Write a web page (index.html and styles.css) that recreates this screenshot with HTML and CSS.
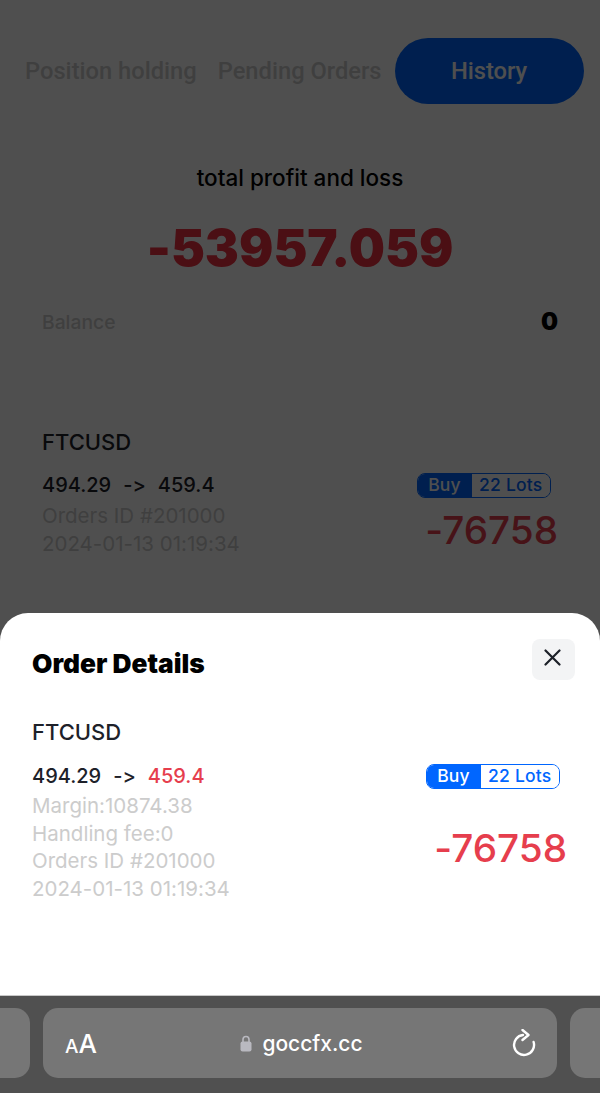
FILE: index.html
```html
<!DOCTYPE html>
<html lang="en">
<head>
<meta charset="utf-8">
<title>Order Details</title>
<link rel="stylesheet" href="styles.css">
</head>
<body>
<main class="page">
  <nav class="tabs">
    <span class="tab tab-first">Position holding</span>
    <span class="tab">Pending Orders</span>
    <span class="tab tab-active">History</span>
  </nav>
  <section class="summary">
    <div class="summary-label">total profit and loss</div>
    <div class="summary-value">-53957.059</div>
    <div class="balance"><span class="balance-label">Balance</span><span class="balance-value">0</span></div>
  </section>
  <section class="order order-list">
    <div class="symbol">FTCUSD</div>
    <div class="order-body">
      <div class="order-info">
        <div class="prices"><span>494.29</span><span>-&gt;</span><span>459.4</span></div>
        <div class="meta">Orders ID #201000</div>
        <div class="meta">2024-01-13 01:19:34</div>
      </div>
      <div class="order-side">
        <div class="badge"><span class="badge-buy">Buy</span><span class="badge-lots">22 Lots</span></div>
        <div class="pnl">-76758</div>
      </div>
    </div>
  </section>
</main>
<div class="scrim"></div>
<div class="bottom">
  <section class="sheet">
    <header class="sheet-head">
      <h2 class="sheet-title">Order Details</h2>
      <button class="close" aria-label="Close">
        <svg width="17" height="17" viewBox="0 0 17 17"><path d="M1.5 1.5l14 14M15.5 1.5l-14 14" fill="none" stroke="#1d2129" stroke-width="2.2" stroke-linecap="round"/></svg>
      </button>
    </header>
    <div class="order">
      <div class="symbol">FTCUSD</div>
      <div class="order-body">
        <div class="order-info">
          <div class="prices"><span>494.29</span><span>-&gt;</span><span class="down">459.4</span></div>
          <div class="meta">Margin:10874.38</div>
          <div class="meta">Handling fee:0</div>
          <div class="meta">Orders ID #201000</div>
          <div class="meta">2024-01-13 01:19:34</div>
        </div>
        <div class="order-side sheet-side">
          <div class="badge"><span class="badge-buy">Buy</span><span class="badge-lots">22 Lots</span></div>
          <div class="pnl">-76758</div>
        </div>
      </div>
    </div>
  </section>
  <div class="browser">
    <div class="pill pill-side pill-left"></div>
    <div class="pill pill-url">
      <span class="aa"><span class="aa-small">A</span><span class="aa-big">A</span></span>
      <span class="address">
        <svg width="12" height="17" viewBox="0 0 12 17"><path d="M3 7V4.5a3 3 0 0 1 6 0V7" fill="none" stroke="#b9b9c0" stroke-width="1.6"/><rect x="0.5" y="6.5" width="11" height="10" rx="2" fill="#b9b9c0"/></svg>
        <span>goccfx.cc</span>
      </span>
      <svg class="reload" width="24" height="29" viewBox="0 0 24 29"><path d="M11 6A10 10 0 1 0 21.6 13" fill="none" stroke="#fff" stroke-width="2.4" stroke-linecap="round"/><path d="M10.5 1l6 5-6 5" fill="none" stroke="#fff" stroke-width="2.4" stroke-linecap="round" stroke-linejoin="round"/></svg>
    </div>
    <div class="pill pill-side pill-right"></div>
  </div>
</div>
</body>
</html>
```
FILE: styles.css
```css
* { box-sizing: border-box; }
html, body { margin: 0; height: 100%; }
body {
  position: relative;
  width: 600px;
  height: 1093px;
  overflow: hidden;
  background: #fff;
  font-family: Inter, "Liberation Sans", sans-serif;
  font-feature-settings: "calt" 0;
  color: #1d2129;
}
.page { display: flex; flex-direction: column; }
.tabs {
  display: flex;
  align-items: center;
  padding: 38px 16px 0 25px;
  font-family: Roboto, sans-serif;
  font-size: 23.7px;
  font-weight: 500;
  color: #ccc;
}
.tab { white-space: nowrap; margin-right: 21px; }
.tab-active {
  width: 189px;
  height: 66px;
  margin: 0 0 0 -8px;
  border-radius: 33px;
  background: #0066ff;
  color: #fff;
  display: flex;
  align-items: center;
  justify-content: center;
}
.summary { padding: 60px 42px 0; }
.summary-label { text-align: center; font-size: 22.5px; font-weight: 500; line-height: 28px; color: #000; }
.summary-value {
  margin-top: 26px;
  text-align: center;
  font-size: 51px;
  font-weight: 900;
  line-height: 60px;
  color: #f03040;
}
.balance {
  display: flex;
  justify-content: space-between;
  align-items: center;
  height: 28px;
  margin-top: 30px;
  line-height: 28px;
}
.balance-label { font-size: 19.3px; color: #ccc; font-weight: 500; }
.balance-value { font-size: 24px; font-weight: 900; color: #000; }
.order-list { padding: 92px 42px 0; }
.symbol { font-size: 22px; font-weight: 500; line-height: 28px; }
.order-body { display: flex; justify-content: space-between; margin-top: 15px; }
.prices { display: flex; gap: 12px; font-size: 20px; font-weight: 500; line-height: 28px; }
.meta { font-size: 20.5px; line-height: 27.5px; color: #ccc; }
.order-info .prices + .meta { margin-top: 2px; }
.order-list .order-info .prices + .meta { margin-top: 3px; }
.order-side { display: flex; flex-direction: column; align-items: flex-end; }
.badge {
  display: flex;
  width: 134.5px;
  height: 25px;
  border: 1.5px solid #0066ff;
  border-radius: 8px;
  overflow: hidden;
  font-size: 17.5px;
  font-weight: 500;
  line-height: 22px;
  letter-spacing: 0.2px;
  margin: 2px 7px 0 0;
}
.badge-buy { flex: 0 0 54px; background: #0066ff; color: #fff; text-align: center; }
.badge-lots { flex: 1; background: #fff; color: #0066ff; text-align: center; }
.pnl { margin-top: 10px; font-size: 38.7px; font-weight: 550; line-height: 44px; color: #e63e4d; }
.scrim { position: absolute; inset: 0; background: rgba(0, 0, 0, 0.69); }
.bottom {
  position: absolute;
  left: 0;
  right: 0;
  bottom: 0;
  display: flex;
  flex-direction: column;
}
.sheet {
  height: 382px;
  padding: 26px 25px 0 32px;
  background: #fff;
  border-radius: 28px 28px 0 0;
}
.sheet-head { display: flex; justify-content: space-between; align-items: flex-start; }
.sheet-title { margin: 10px 0 0; font-size: 26.3px; font-weight: 900; line-height: 30px; color: #000; }
.close {
  display: flex;
  align-items: center;
  justify-content: center;
  width: 43px;
  height: 41px;
  padding: 0 2px 4px 0;
  border: 0;
  border-radius: 8px;
  background: #f3f4f5;
}
.sheet .order { margin-top: 38px; }
.sheet .order-body { margin-top: 16px; padding-right: 8px; }
.sheet-side .badge { margin-right: 7px; }
.sheet-side .pnl { margin-top: 37px; }
.down { color: #e63e4d; }
.browser {
  display: flex;
  gap: 13px;
  height: 98px;
  margin: 0 -13px;
  padding: 12px 0 16px;
  overflow: hidden;
  background: #505050;
  border-top: 1px solid #c8c8c8;
}
.pill { height: 70px; border-radius: 15px; background: #767676; }
.pill-side { flex: 1; min-width: 0; }
.pill-url {
  flex: 0 0 514px;
  display: flex;
  align-items: center;
  justify-content: space-between;
  padding: 0 21px 0 22px;
  color: #fff;
}
.aa { display: flex; align-items: baseline; width: 32px; font-weight: 500; }
.aa-small { font-size: 19px; }
.aa-big { font-size: 26px; }
.address { display: flex; align-items: center; gap: 10px; margin-right: 6px; font-size: 21px; font-weight: 500; }
.reload { display: block; }
```
